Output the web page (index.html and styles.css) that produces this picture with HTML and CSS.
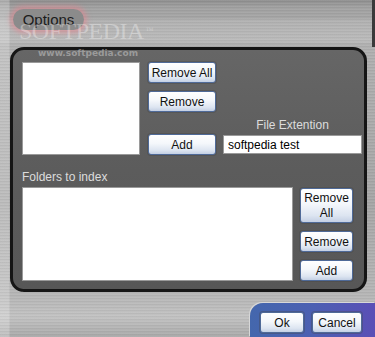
FILE: index.html
```html
<!DOCTYPE html>
<html lang="en">
<head>
    <meta charset="UTF-8">
    <meta name="viewport" content="width=device-width, initial-scale=1.0">
    <title>Options</title>
    <link rel="stylesheet" href="styles.css">
</head>
<body>
    <div class="window">
        <div class="header">
            <div class="tab">Options</div>
        </div>

        <div class="panel">
            <div class="top-row">
                <div class="list list-small"></div>
                <div class="btn-col">
                    <button class="btn">Remove All</button>
                    <button class="btn">Remove</button>
                    <button class="btn btn-last">Add</button>
                </div>
                <div class="ext">
                    <label class="ext-label" for="ext">File Extention</label>
                    <input type="text" id="ext" class="ext-input" value="softpedia test">
                </div>
            </div>

            <p class="section-label">Folders to index</p>
            <div class="bottom-row">
                <div class="list list-wide"></div>
                <div class="btn-col btn-col-narrow">
                    <button class="btn btn-tall">Remove<br>All</button>
                    <button class="btn">Remove</button>
                    <button class="btn">Add</button>
                </div>
            </div>
        </div>

        <div class="footer">
            <div class="ok-bar">
                <button class="btn btn-ok">Ok</button>
                <button class="btn btn-cancel">Cancel</button>
            </div>
        </div>

        <div class="watermark">SOFTPEDIA<span class="tm">™</span></div>
        <div class="watermark-url">www.softpedia.com</div>
    </div>
</body>
</html>
```

FILE: styles.css
```css
body {
  margin: 0;
  font-family: 'Liberation Sans', Arial, sans-serif;
}

.window {
  position: relative;
  width: 375px;
  height: 337px;
  overflow: hidden;
  display: flex;
  flex-direction: column;
  background:
    repeating-linear-gradient(180deg, rgba(255, 255, 255, 0.06) 0 1px, rgba(0, 0, 0, 0.04) 1px 2px, rgba(255, 255, 255, 0) 2px 3px),
    linear-gradient(90deg, rgba(255, 255, 255, 0.25) 0 9px, rgba(255, 255, 255, 0) 10px),
    linear-gradient(180deg, #8e8e8e 0, #a2a2a2 8px, #a6a6a6 20px, #b0b0b0 40px, #a6a6a6 60%, #b6b6b6 88%, #c2c2c2 94%, #a9a9a9 100%);
}

.header {
  height: 47px;
  box-sizing: border-box;
  padding: 9px 0 0 13px;
  border-right: 3px solid #3a3a3a;
  background: linear-gradient(180deg, rgba(0, 0, 0, 0) 0 18px, rgba(255, 255, 255, 0.12) 20px 42px, rgba(0, 0, 0, 0) 44px);
}

.tab {
  width: 71px;
  height: 21px;
  border-radius: 11px;
  background: #8b8b8b;
  box-shadow: 0 0 5px 3px rgba(232, 130, 140, 0.55);
  color: #1c1c1c;
  font-size: 15px;
  line-height: 21px;
  text-align: center;
}

.panel {
  margin-left: 10px;
  width: 357px;
  height: 245px;
  box-sizing: border-box;
  border: 3px solid #151515;
  border-radius: 14px;
  background: linear-gradient(180deg, #666 0, #5c5c5c 50%, #575757 100%);
  padding: 12px 0 0 9px;
}

.top-row,
.bottom-row {
  display: flex;
}

.list {
  background: #fff;
  border: 1px solid #9a9a9a;
  box-sizing: border-box;
}

.list-small {
  width: 118px;
  height: 93px;
}

.list-wide {
  width: 271px;
  height: 94px;
}

.btn-col {
  display: flex;
  flex-direction: column;
  gap: 8px;
  width: 68px;
  margin-left: 8px;
}

.btn-col-narrow {
  width: 53px;
  margin-left: 7px;
  margin-top: 1px;
}

.btn {
  height: 21px;
  padding: 0;
  box-sizing: border-box;
  border: 1px solid #4f6a98;
  border-radius: 3px;
  background: linear-gradient(180deg, #ffffff 0, #f4f7fb 45%, #dde5f1 80%, #c4d0e4 100%);
  box-shadow: 0 0 0 1px rgba(70, 70, 70, 0.35);
  font-family: 'Liberation Sans', Arial, sans-serif;
  font-size: 12px;
  color: #111;
  cursor: pointer;
}

.btn-last {
  margin-top: 14px;
}

.btn-tall {
  height: 35px;
  line-height: 15px;
}

.ext {
  display: flex;
  flex-direction: column;
  justify-content: flex-end;
  width: 139px;
  margin-left: 7px;
  padding-bottom: 1px;
}

.ext-label {
  color: #dcdcdc;
  font-size: 12px;
  text-align: center;
  margin-bottom: 3px;
}

.ext-input {
  height: 19px;
  box-sizing: border-box;
  margin: 0;
  padding: 0 4px;
  border: 1px solid #9a9a9a;
  font-family: 'Liberation Sans', Arial, sans-serif;
  font-size: 12px;
  color: #000;
}

.section-label {
  margin: 15px 0 3px;
  color: #dcdcdc;
  font-size: 12px;
  line-height: 14px;
}

.footer {
  flex: 1;
  display: flex;
  justify-content: flex-end;
  align-items: flex-end;
}

.ok-bar {
  display: flex;
  gap: 8px;
  width: 125px;
  height: 34px;
  box-sizing: border-box;
  padding: 9px 0 0 10px;
  border-top-left-radius: 13px;
  background: linear-gradient(90deg, #4467ad 0, #4c60b2 50%, #5a4fb6 100%);
  box-shadow: -1px -1px 0 #d8d8d8;
}

.btn-ok {
  width: 44px;
}

.btn-cancel {
  width: 50px;
}

.watermark {
  position: absolute;
  left: 19px;
  top: 19px;
  font-family: 'Liberation Serif', 'Times New Roman', serif;
  font-size: 24px;
  line-height: 24px;
  letter-spacing: -0.5px;
  color: rgba(255, 255, 255, 0.32);
  pointer-events: none;
}

.tm {
  font-size: 8px;
  vertical-align: top;
  margin-left: 2px;
}

.watermark-url {
  position: absolute;
  left: 38px;
  top: 48px;
  font-family: 'DejaVu Sans', sans-serif;
  font-size: 9px;
  font-weight: bold;
  color: rgba(200, 200, 200, 0.55);
  pointer-events: none;
}
```
